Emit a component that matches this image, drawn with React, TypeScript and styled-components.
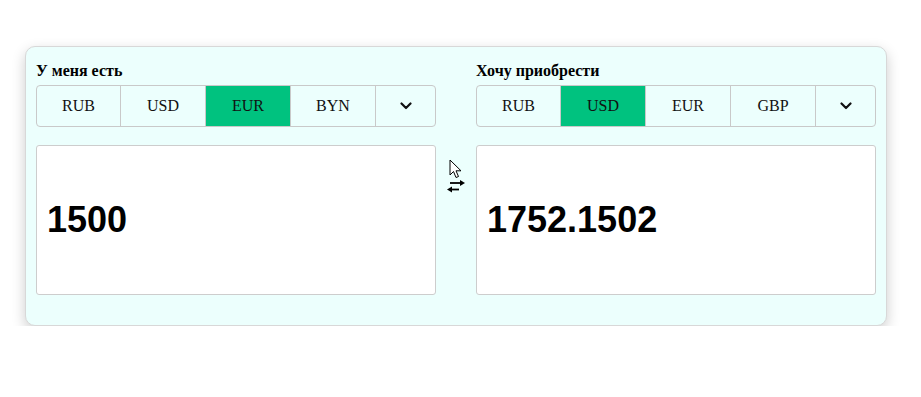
import React, { useState } from 'react';
import styled, { createGlobalStyle } from 'styled-components';

const GlobalStyle = createGlobalStyle`
  body {
    margin: 0;
    background: #ffffff;
    font-family: "Liberation Serif", "Times New Roman", serif;
  }
`;

const Page = styled.div`
  padding: 46px 0 0 25px;
`;

const Card = styled.div`
  box-sizing: border-box;
  width: 862px;
  display: flex;
  padding: 15px 10px 30px;
  background: #ecfffd;
  border: 1px solid #d8d8d8;
  border-radius: 10px;
  box-shadow: 0 5px 14px rgba(0, 0, 0, 0.2);
`;

const Block = styled.div`
  width: 400px;
  display: flex;
  flex-direction: column;
`;

const Title = styled.h4`
  margin: 0 0 5px;
  height: 18px;
  line-height: 18px;
  font-size: 16px;
  font-weight: bold;
  color: #000;
`;

const Tabs = styled.ul`
  display: flex;
  margin: 0;
  padding: 0;
  list-style: none;
  border: 1px solid #c9c9c9;
  border-radius: 4px;
  overflow: hidden;
  height: 42px;
  box-sizing: border-box;
`;

const Tab = styled.li<{ $active?: boolean; $arrow?: boolean }>`
  display: flex;
  align-items: center;
  justify-content: center;
  width: ${(p) => (p.$arrow ? 'auto' : '85px')};
  flex: ${(p) => (p.$arrow ? '1' : 'none')};
  border-right: ${(p) => (p.$arrow ? 'none' : '1px solid #c9c9c9')};
  background: ${(p) => (p.$active ? '#00c27f' : 'transparent')};
  font-size: 16px;
  color: #111;
  cursor: pointer;
  box-sizing: border-box;
  &:first-child {
    width: 84px;
  }
`;

const Amount = styled.input`
  box-sizing: border-box;
  margin-top: 18px;
  width: 400px;
  height: 150px;
  padding: 0 10px;
  border: 1px solid #cdcdcd;
  border-radius: 3px;
  background: #fff;
  font-family: "Liberation Sans", Arial, sans-serif;
  font-size: 36px;
  font-weight: bold;
  color: #000;
  outline: none;
`;

const Middle = styled.div`
  width: 40px;
  display: flex;
  justify-content: center;
  padding-top: 117px;
`;

const SwapHolder = styled.div`
  position: relative;
  width: 20px;
  height: 14px;
`;

const Cursor = styled.svg`
  position: absolute;
  left: 3px;
  top: -20px;
`;

const Chevron = () => (
  <svg width="12" height="8" viewBox="0 0 12 8">
    <path d="M1.5 1.5 L6 6 L10.5 1.5" fill="none" stroke="#111" strokeWidth="2.2" strokeLinecap="round" strokeLinejoin="round" />
  </svg>
);

const SwapIcon = () => (
  <svg width="20" height="14" viewBox="0 0 20 14">
    <path d="M4 4 H16" stroke="#000" strokeWidth="1.8" />
    <path d="M14 1 L19 4 L14 7 Z" fill="#000" />
    <path d="M5 10.5 H13" stroke="#000" strokeWidth="1.8" />
    <path d="M6 7.5 L1 10.5 L6 13.5 Z" fill="#000" />
  </svg>
);

interface CurrencyBlockProps {
  title: string;
  currencies: string[];
  active: string;
  value: string;
  onSelect: (c: string) => void;
}

const CurrencyBlock = ({ title, currencies, active, value, onSelect }: CurrencyBlockProps) => (
  <Block>
    <Title>{title}</Title>
    <Tabs>
      {currencies.map((c) => (
        <Tab key={c} $active={c === active} onClick={() => onSelect(c)}>
          {c}
        </Tab>
      ))}
      <Tab $arrow>
        <Chevron />
      </Tab>
    </Tabs>
    <Amount type="text" value={value} readOnly />
  </Block>
);

const App = () => {
  const [from, setFrom] = useState('EUR');
  const [to, setTo] = useState('USD');

  return (
    <Page>
      <GlobalStyle />
      <Card>
        <CurrencyBlock
          title="У меня есть"
          currencies={['RUB', 'USD', 'EUR', 'BYN']}
          active={from}
          value="1500"
          onSelect={setFrom}
        />
        <Middle>
          <SwapHolder>
            <Cursor width="13" height="21" viewBox="0 0 13 21">
              <path d="M1 1 L1 16 L4.5 12.5 L7 18.5 L9.5 17.5 L7 11.8 L12 11.8 Z" fill="#fff" stroke="#000" strokeWidth="1" strokeLinejoin="round" />
            </Cursor>
            <SwapIcon />
          </SwapHolder>
        </Middle>
        <CurrencyBlock
          title="Хочу приобрести"
          currencies={['RUB', 'USD', 'EUR', 'GBP']}
          active={to}
          value="1752.1502"
          onSelect={setTo}
        />
      </Card>
    </Page>
  );
};

export default App;
